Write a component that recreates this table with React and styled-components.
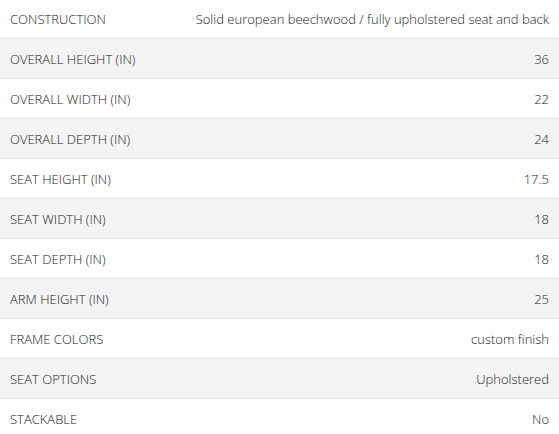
import React from "react";
import styled, { createGlobalStyle } from "styled-components";

const Global = createGlobalStyle`
  html, body { margin: 0; padding: 0; background: #fff; }
  body { font-family: "Open Sans", "Liberation Sans", sans-serif; }
`;

const Table = styled.div`
  width: 559px;
  margin-top: -2px;
  display: flex;
  flex-direction: column;
`;

const Row = styled.div`
  display: flex;
  align-items: center;
  justify-content: space-between;
  height: 39px;
  padding: 0 10px;
  border-top: 1px solid #e6e6e6;
  background: ${(p) => (p.$shaded ? "#f4f4f4" : "#ffffff")};
  font-size: 13px;
  font-weight: 300;
  color: #222;
`;

const Label = styled.span`
  text-transform: uppercase;
  white-space: nowrap;
`;

const Value = styled.span`
  text-align: right;
  white-space: nowrap;
`;

const specs = [
  ["Construction", "Solid european beechwood / fully upholstered seat and back"],
  ["Overall Height (in)", "36"],
  ["Overall Width (in)", "22"],
  ["Overall Depth (in)", "24"],
  ["Seat Height (in)", "17.5"],
  ["Seat Width (in)", "18"],
  ["Seat Depth (in)", "18"],
  ["Arm Height (in)", "25"],
  ["Frame Colors", "custom finish"],
  ["Seat Options", "Upholstered"],
  ["Stackable", "No"],
];

export default function App() {
  return (
    <>
      <Global />
      <Table>
        {specs.map(([k, v], i) => (
          <Row key={k} $shaded={i % 2 === 1}>
            <Label>{k}</Label>
            <Value>{v}</Value>
          </Row>
        ))}
      </Table>
    </>
  );
}
